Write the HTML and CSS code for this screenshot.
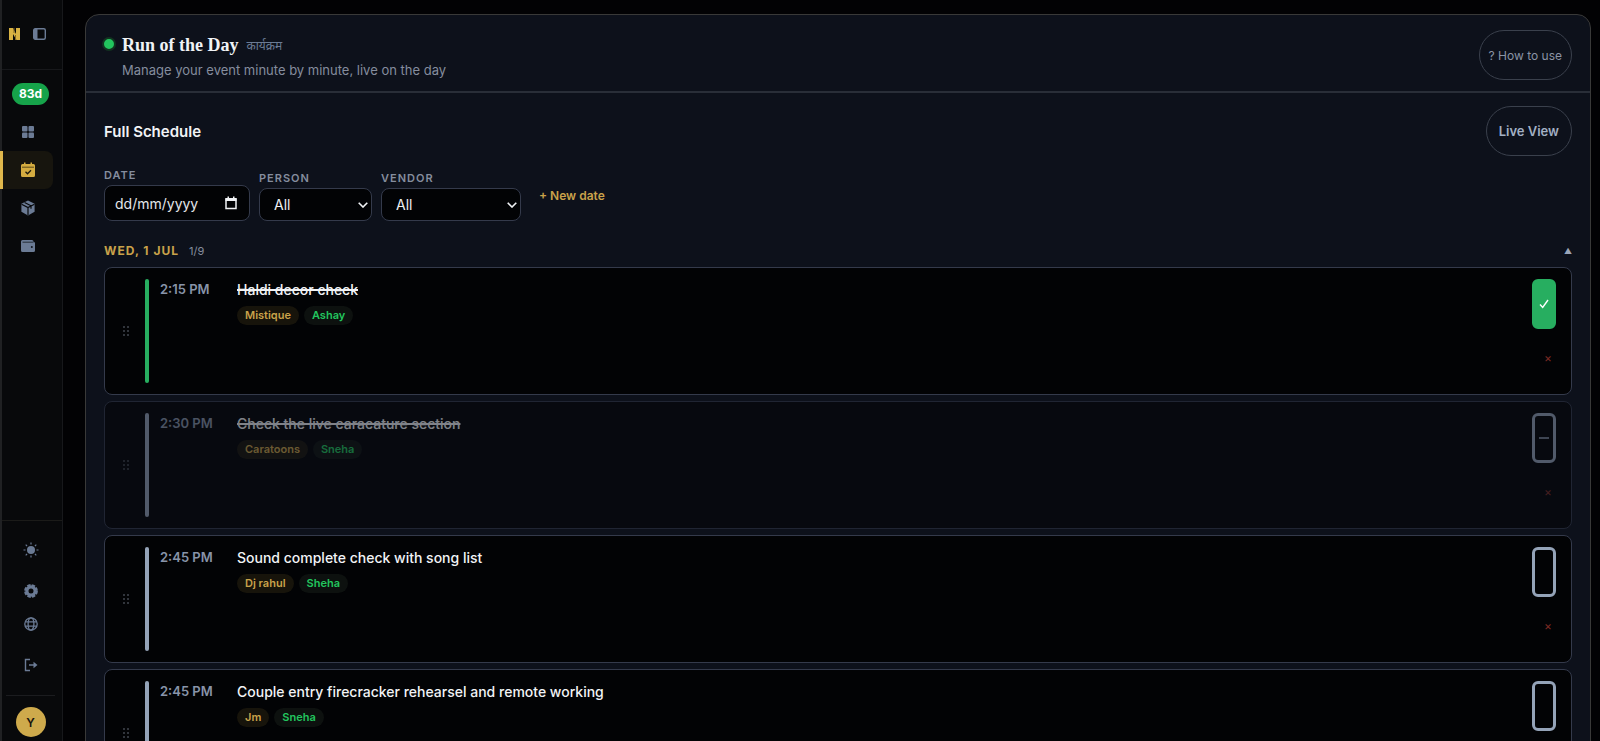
FILE: index.html
```html
<!DOCTYPE html>
<html lang="en">
<head>
<meta charset="utf-8">
<meta name="viewport" content="width=device-width, initial-scale=1">
<title>Run of the Day</title>
<link rel="stylesheet" href="styles.css">
</head>
<body>
<div class="app">
  <aside class="sidebar">
    <div class="brand">
      <a class="logo" href="#" aria-label="Home"><svg width="11" height="12" viewBox="0 0 11 12"><path d="M0 0h4l3 6V0h4v12H7.500L4 6v6H0z" fill="#d9b343"/><path d="M5 0v5M6.500 7v5" stroke="#846a24"/></svg></a>
      <button class="icon-btn" aria-label="Toggle sidebar"><svg width="13" height="12" viewBox="0 0 13 12"><rect x=".7" y=".7" width="11.600" height="10.600" rx="1.500" fill="none" stroke="currentColor" stroke-width="1.400"/><path d="M1 1h3.500v10H1z" fill="currentColor"/></svg></button>
    </div>
    <nav class="nav">
      <span class="countdown">83d</span>
      <a class="nav-item" href="#" aria-label="Dashboard"><svg width="14" height="14" viewBox="0 0 14 14" fill="currentColor"><rect x="1" y="1" width="5.500" height="5.500" rx="1"/><rect x="7.500" y="1" width="5.500" height="5.500" rx="1"/><rect x="1" y="7.500" width="5.500" height="5.500" rx="1"/><rect x="7.500" y="7.500" width="5.500" height="5.500" rx="1"/></svg></a>
      <a class="nav-item active" href="#" aria-label="Schedule" aria-current="page"><svg width="14" height="16" viewBox="0 0 14 16"><path d="M1.500 2H3V.5h1.500V2h5V.5H11V2h1.500Q14 2 14 3.500v10q0 1.500-1.500 1.500h-11Q0 15 0 13.500v-10Q0 2 1.500 2z" fill="currentColor"/><path d="M1 5.200h12" stroke="#5c4a18"/><path d="m4.500 9.800 2 2 3.500-3.600" fill="none" stroke="#1b180d" stroke-width="1.300"/></svg></a>
      <a class="nav-item" href="#" aria-label="Vendors"><svg width="16" height="16" viewBox="0 0 16 16"><path d="m8 .6 6.600 3.200v8L8 15.400 1.400 11.800v-8z" fill="currentColor"/><path d="M1.600 4.200 8 7.500l6.400-3.300M8 7.500V15M4.600 2.500 11 5.800v3" fill="none" stroke="#08090b" stroke-width="1.200"/></svg></a>
      <a class="nav-item" href="#" aria-label="Budget"><svg width="14" height="14" viewBox="0 0 14 14"><path d="M1.500 1h9.500q1.500 0 1.500 1.500V3h.2q1.300 0 1.300 1.300v7.200q0 1.500-1.500 1.500h-11Q0 13 0 11.500v-9Q0 1 1.500 1z" fill="currentColor"/><path d="M1.500 3.200h11" stroke="#262d38"/><circle cx="10.800" cy="8" r="1" fill="#11151c"/></svg></a>
    </nav>
    <div class="tools">
      <button class="icon-btn tool spaced" aria-label="Theme"><svg width="16" height="16" viewBox="0 0 16 16"><circle cx="8" cy="8" r="4" fill="currentColor"/><path d="M8 .5v2M8 13.500v2M.5 8h2M13.500 8h2M2.700 2.700l1.400 1.400M11.900 11.900l1.400 1.400M2.700 13.300l1.400-1.400M11.900 4.100l1.400-1.400" stroke="currentColor" stroke-width="1.200"/></svg></button>
      <button class="icon-btn tool" aria-label="Settings"><svg width="14" height="14" viewBox="0 0 14 14"><circle cx="7" cy="7" r="4.100" fill="none" stroke="currentColor" stroke-width="3.200"/><circle cx="7" cy="7" r="5.800" fill="none" stroke="currentColor" stroke-width="2.200" stroke-dasharray="3.400 1.155"/></svg></button>
      <button class="icon-btn tool" aria-label="Language"><svg width="14" height="14" viewBox="0 0 14 14" fill="none" stroke="currentColor" stroke-width="1.300"><circle cx="7" cy="7" r="6.200"/><ellipse cx="7" cy="7" rx="2.900" ry="6.200"/><path d="M1.300 4.800h11.400M1.300 9.200h11.400"/></svg></button>
      <button class="icon-btn tool exit" aria-label="Log out"><svg width="14" height="14" viewBox="0 0 14 14" fill="none" stroke="currentColor" stroke-width="1.400"><path d="M6 1.500H1.500v11H6M5 7h7"/><path d="m9.500 3.800 4 3.200-4 3.200z" fill="currentColor" stroke="none"/></svg></button>
      <div class="account"><button class="avatar">Y</button></div>
    </div>
  </aside>

  <main class="main">
    <section class="panel">
      <header class="panel-head">
        <span class="live-dot"></span>
        <div class="heading">
          <div class="title-line"><h1>Run of the Day</h1><span class="native" lang="hi">कार्यक्रम</span></div>
          <p>Manage your event minute by minute, live on the day</p>
        </div>
        <button class="pill help">? How to use</button>
      </header>
      <div class="panel-body">
        <div class="section-head"><h2>Full Schedule</h2><button class="pill strong">Live View</button></div>
        <form class="filters">
          <div class="field"><label for="date">Date</label>
            <div class="control date"><input id="date" type="text" placeholder="dd/mm/yyyy"><svg class="calendar" width="12" height="14" viewBox="0 0 12 14"><path d="M1 3h10v9.500H1z" fill="none" stroke="currentColor" stroke-width="1.500"/><path d="M.5 2h11v3H.5zM2.500.5H4V3H2.500zM8 .5h1.500V3H8z" fill="currentColor"/></svg></div></div>
          <div class="field"><label for="person">Person</label>
            <div class="control person"><select id="person"><option>All</option></select><svg class="chevron" width="10" height="6" viewBox="0 0 10 6"><path d="m.7.7 4.300 4.300L9.300.7" fill="none" stroke="currentColor" stroke-width="1.600"/></svg></div></div>
          <div class="field"><label for="vendor">Vendor</label>
            <div class="control vendor"><select id="vendor"><option>All</option></select><svg class="chevron" width="10" height="6" viewBox="0 0 10 6"><path d="m.7.7 4.300 4.300L9.300.7" fill="none" stroke="currentColor" stroke-width="1.600"/></svg></div></div>
          <button class="new-date" type="button">+ New date</button>
        </form>
        <button class="day"><span class="day-name">Wed, 1 Jul</span><span class="day-count">1/9</span><span class="caret">▲</span></button>
        <div class="list">
          <article class="row done">
            <svg class="grip" width="8" height="12" viewBox="0 0 8 12"><path d="M1 2h2M5 2h2M1 6h2M5 6h2M1 10h2M5 10h2" stroke="currentColor" stroke-width="1.500"/></svg>
            <span class="bar"></span><time class="time">2:15 PM</time>
            <div class="info"><h3>Haldi decor check</h3><div class="tags"><span class="tag vendor-tag">Mistique</span><span class="tag person-tag">Ashay</span></div></div>
            <div class="actions"><div class="status"><input type="checkbox" checked aria-label="Haldi decor check"><svg width="10" height="10" viewBox="0 0 10 10"><path d="m1 5.500 2.700 3L9 1" fill="none" stroke="currentColor" stroke-width="1.400"/></svg></div><button class="remove" aria-label="Delete">×</button></div>
          </article>
          <article class="row skipped">
            <svg class="grip" width="8" height="12" viewBox="0 0 8 12"><path d="M1 2h2M5 2h2M1 6h2M5 6h2M1 10h2M5 10h2" stroke="currentColor" stroke-width="1.500"/></svg>
            <span class="bar"></span><time class="time">2:30 PM</time>
            <div class="info"><h3>Check the live caracature section</h3><div class="tags"><span class="tag vendor-tag">Caratoons</span><span class="tag person-tag">Sneha</span></div></div>
            <div class="actions"><div class="status"><input type="checkbox" aria-label="Check the live caracature section"><svg width="10" height="10" viewBox="0 0 10 10"><path d="M0 5h10" stroke="currentColor" stroke-width="1.500"/></svg></div><button class="remove" aria-label="Delete">×</button></div>
          </article>
          <article class="row">
            <svg class="grip" width="8" height="12" viewBox="0 0 8 12"><path d="M1 2h2M5 2h2M1 6h2M5 6h2M1 10h2M5 10h2" stroke="currentColor" stroke-width="1.500"/></svg>
            <span class="bar"></span><time class="time">2:45 PM</time>
            <div class="info"><h3>Sound complete check with song list</h3><div class="tags"><span class="tag vendor-tag">Dj rahul</span><span class="tag person-tag">Sheha</span></div></div>
            <div class="actions"><div class="status"><input type="checkbox" aria-label="Sound complete check with song list"></div><button class="remove" aria-label="Delete">×</button></div>
          </article>
          <article class="row">
            <svg class="grip" width="8" height="12" viewBox="0 0 8 12"><path d="M1 2h2M5 2h2M1 6h2M5 6h2M1 10h2M5 10h2" stroke="currentColor" stroke-width="1.500"/></svg>
            <span class="bar"></span><time class="time">2:45 PM</time>
            <div class="info"><h3>Couple entry firecracker rehearsel and remote working</h3><div class="tags"><span class="tag vendor-tag">Jm</span><span class="tag person-tag">Sneha</span></div></div>
            <div class="actions"><div class="status"><input type="checkbox" aria-label="Couple entry firecracker rehearsel and remote working"></div><button class="remove" aria-label="Delete">×</button></div>
          </article>
        </div>
      </div>
    </section>
  </main>
</div>
</body>
</html>
```
FILE: styles.css
```css
:root {
  --gold: #c9a24a;
  --green: #22c55e;
  --slate: #94a3b8;
  --muted: #6b7b95;
  --line: #343a4b;
  --panel: #0d111b;
  --ink: #020305;
}

* { box-sizing: border-box; }

body {
  margin: 0;
  background: #020204;
  color: #f1f3f6;
  font-family: Inter, "Noto Sans", sans-serif;
  font-size: 14px;
}

h1, h2, h3, p { margin: 0; }
button, input, select { font: inherit; color: inherit; }
button { border: 0; padding: 0; background: none; }
svg { display: block; }

.app { display: flex; height: 100vh; overflow: hidden; }

/* Sidebar */
.sidebar {
  flex: none;
  display: flex;
  flex-direction: column;
  width: 63px;
  background: #08090b;
  border: 1px solid #17181b;
  border-width: 0 1px 0 2px;
  border-left-color: #202123;
}
.brand {
  display: flex;
  align-items: center;
  gap: 13px;
  height: 70px;
  padding: 0 0 2px 7px;
  border-bottom: 1px solid #17181b;
}
.icon-btn { display: grid; place-items: center; color: var(--muted); }
.nav { display: flex; flex-direction: column; flex: 1; padding-top: 13px; }
.countdown {
  align-self: flex-start;
  margin: 0 0 8px 10px;
  padding: 0 7px;
  border-radius: 11px;
  background: #16a34a;
  color: #fff;
  font-size: 12px;
  font-weight: 700;
  line-height: 22px;
}
.nav-item {
  display: grid;
  place-items: center;
  height: 38px;
  width: 51px;
  color: var(--muted);
}
.nav-item.active {
  margin-left: -2px;
  width: 53px;
  border-left: 3px solid #e0b84c;
  border-radius: 0 8px 8px 0;
  background: #17150e;
  color: #d4ac40;
}
.tools {
  display: flex;
  flex-direction: column;
  padding: 12px 3px 4px 0;
  border-top: 1px solid #1b1b19;
}
.tool { height: 33px; }
.tool.spaced { margin-bottom: 8px; }
.tool.exit { margin-top: 8px; }
.account {
  display: flex;
  justify-content: center;
  margin: 14px 4px 0;
  padding-top: 11px;
  border-top: 1px solid #1b1c1f;
}
.avatar {
  width: 30px;
  height: 30px;
  border-radius: 50%;
  background: #ceaa4c;
  color: #17140c;
  font-size: 12px;
  font-weight: 600;
}

/* Panel */
.main { flex: 1; min-width: 0; padding: 14px 9px 0 22px; }
.panel {
  border: 1px solid #393938;
  border-radius: 14px;
  background: var(--panel);
}
.panel-head {
  display: flex;
  align-items: center;
  padding: 12px 18px 8px 16px;
  height: 78px;
  border-bottom: 2px solid #292e38;
}
.live-dot {
  align-self: flex-start;
  width: 14px;
  height: 14px;
  margin: 10px 6px 0 0;
  border: 2px solid #123321;
  border-radius: 50%;
  background: var(--green);
}
.heading { flex: 1; padding-top: 4px; }
.title-line { display: flex; align-items: center; gap: 8px; }
h1 { font: 700 18px/26px "Liberation Serif", serif; }
.native { color: var(--muted); font-size: 12px; }
.heading p { color: #858d9e; font-size: 13px; line-height: 24px; }
.pill {
  height: 50px;
  padding: 0 12px;
  border: 1px solid #3a404c;
  border-radius: 25px;
  color: #8b94a5;
  font-size: 13px;
}
.pill.help { padding: 0 9px; font-size: 12px; }
.pill.strong { color: #a2b0c4; font-weight: 600; }
.panel-body { padding: 13px 18px 0; }
.section-head { display: flex; align-items: center; justify-content: space-between; }
h2 { font-size: 15px; font-weight: 600; }

/* Filters */
.filters { display: flex; align-items: flex-end; gap: 9px; margin-top: 9px; }
.field label {
  display: block;
  color: #858d9e;
  font-size: 11px;
  font-weight: 600;
  letter-spacing: 1px;
  line-height: 20px;
  text-transform: uppercase;
}
.control { display: grid; align-items: center; }
.control > * { grid-area: 1 / 1; }
.control svg { justify-self: end; pointer-events: none; }
.control input, .control select {
  width: 100%;
  height: 33px;
  padding: 0 14px;
  border: 1px solid var(--line);
  border-radius: 8px;
  background: var(--ink);
  color: #eef0f3;
  appearance: none;
}
.control.date { width: 146px; }
.control.date input { height: 36px; padding: 0 10px; }
.control input::placeholder { color: #e4e6ea; opacity: 1; }
.control.person { width: 113px; }
.control.vendor { width: 140px; }
.calendar { margin-right: 13px; }
.chevron { margin-right: 4px; }
.new-date {
  align-self: center;
  margin: 4px 0 0 9px;
  color: var(--gold);
  font-size: 12px;
  font-weight: 600;
}

/* Schedule */
.day {
  display: flex;
  align-items: center;
  gap: 10px;
  width: 100%;
  margin-top: 21px;
  line-height: 18px;
}
.day-name {
  color: var(--gold);
  font-size: 12px;
  font-weight: 700;
  letter-spacing: 1px;
  text-transform: uppercase;
}
.day-count { color: #858d9e; font-size: 11px; }
.caret { margin-left: auto; color: #9aa5b8; font-size: 8px; }
.list { display: flex; flex-direction: column; gap: 6px; margin-top: 7px; }
.row {
  display: flex;
  flex: none;
  padding: 11px 15px 11px 17px;
  border: 1px solid var(--line);
  border-radius: 8px;
  background: var(--ink);
}
.row.skipped { opacity: 0.5; }
.grip { align-self: center; margin-right: 15px; color: #42474f; }
.bar { width: 4px; border-radius: 2px; background: var(--slate); }
.done .bar { background: #27ae60; }
.time {
  flex: none;
  width: 88px;
  padding-left: 11px;
  color: #8894a9;
  font-size: 13px;
  font-weight: 600;
  line-height: 20px;
}
.info { flex: 1; }
h3 { font-size: 14px; font-weight: 500; line-height: 22px; }
.done h3, .skipped h3 { text-decoration: line-through; text-decoration-thickness: 2px; }
.tags { display: flex; gap: 5px; margin-top: 5px; }
.tag {
  padding: 0 8px;
  border-radius: 10px;
  font-size: 11px;
  font-weight: 600;
  line-height: 19px;
}
.vendor-tag { background: #17140b; color: var(--gold); }
.person-tag { background: #0d110f; color: var(--green); }
.actions { display: flex; flex-direction: column; align-items: flex-end; gap: 6px; }
.status { display: grid; place-items: center; }
.status > * { grid-area: 1 / 1; pointer-events: none; }
.status input {
  width: 24px;
  height: 50px;
  margin: 0;
  border: 3px solid var(--slate);
  border-radius: 6px;
  appearance: none;
  pointer-events: auto;
}
.status input:checked { border-color: #27ae60; background: #27ae60; }
.status svg { color: var(--slate); }
.done .status svg { color: #fff; }
.remove { width: 16px; height: 48px; padding-bottom: 4px; color: #7c2a24; font-size: 12px; }
```
